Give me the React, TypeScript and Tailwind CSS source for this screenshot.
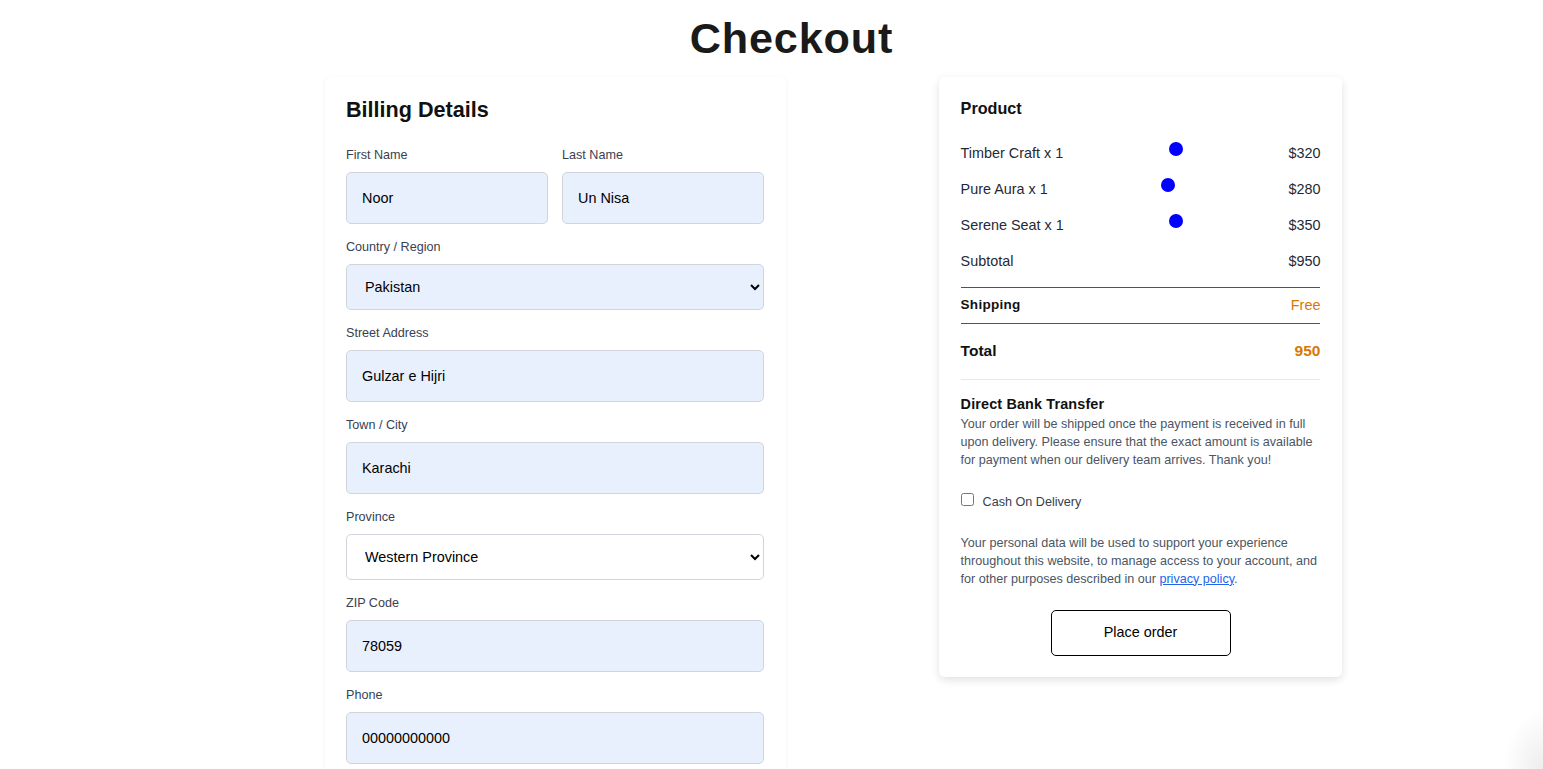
import React from "react";

const items = [
  { name: "Timber Craft x 1", price: "$320" },
  { name: "Pure Aura x 1", price: "$280" },
  { name: "Serene Seat x 1", price: "$350" },
];

function Field({ label, value }: { label: string; value: string }) {
  return (
    <div className="flex flex-col">
      <label className="mb-[8px] text-[12.6px] leading-[18px] text-[#374151]">{label}</label>
      <input
        readOnly
        value={value}
        className="h-[52px] w-full rounded-[5px] border border-[#d1d5db] bg-[#e8f0fe] px-[15px] text-[14.4px] text-black outline-none"
      />
    </div>
  );
}

function SelectField({ label, value, filled }: { label: string; value: string; filled?: boolean }) {
  return (
    <div className="flex flex-col">
      <label className="mb-[8px] text-[12.6px] leading-[18px] text-[#374151]">{label}</label>
      <select
        defaultValue={value}
        className={`h-[46px] w-full rounded-[5px] border border-[#d1d5db] px-[14px] text-[14.4px] text-black outline-none ${
          filled ? "bg-[#e8f0fe]" : "bg-white"
        }`}
      >
        <option>{value}</option>
      </select>
    </div>
  );
}

export default function App() {
  return (
    <div className="relative min-h-screen overflow-hidden bg-white font-['Liberation_Sans',Arial,sans-serif] text-[#111827]">
      <h1 className="pl-[40px] pt-[14px] text-center text-[43.2px] font-bold leading-[48px] tracking-[0.02em] text-[#1a1a1a]">
        Checkout
      </h1>

      <div className="mt-[15px] flex items-start gap-[153px] pl-[325px]">
        {/* billing */}
        <section className="w-[461px] rounded-[6px] bg-white pb-[22px] pl-[21px] pr-[22px] pt-[18px] shadow-[0_1px_4px_rgba(0,0,0,0.06)]">
          <h2 className="text-[21.6px] font-bold leading-[29px] text-[#111]">Billing Details</h2>

          <div className="mt-[22px] flex flex-col gap-[14px]">
            <div className="grid grid-cols-2 gap-[14px]">
              <Field label="First Name" value="Noor" />
              <Field label="Last Name" value="Un Nisa" />
            </div>
            <SelectField label="Country / Region" value="Pakistan" filled />
            <Field label="Street Address" value="Gulzar e Hijri" />
            <Field label="Town / City" value="Karachi" />
            <SelectField label="Province" value="Western Province" />
            <Field label="ZIP Code" value="78059" />
            <Field label="Phone" value="00000000000" />
          </div>
        </section>

        {/* order */}
        <section className="w-[403px] rounded-[6px] bg-white px-[21.6px] pb-[21px] pt-[21px] shadow-[0_3px_8px_rgba(0,0,0,0.12)]">
          <h3 className="text-[16.2px] font-bold leading-[20px] text-[#111]">Product</h3>

          <div className="mt-[25px] flex flex-col gap-[14.4px]">
            {items.map((it) => (
              <div key={it.name} className="flex items-start justify-between text-[14.4px] leading-[21.6px] text-[#1f2937]">
                <span>{it.name}</span>
                <span className="mt-[-1px] h-[14px] w-[14px] rounded-full bg-[#0000ff]" />
                <span>{it.price}</span>
              </div>
            ))}
            <div className="flex justify-between text-[14.4px] leading-[21.6px] text-[#1f2937]">
              <span>Subtotal</span>
              <span>$950</span>
            </div>
          </div>

          <div className="mt-[14px] flex items-center justify-between border-y border-[#475569] pb-[9px] pt-[8px] leading-[18px]">
            <span className="text-[13.5px] font-bold tracking-[0.02em] text-[#111]">Shipping</span>
            <span className="text-[14.4px] text-[#d97706]">Free</span>
          </div>

          <div className="flex items-center justify-between border-b border-[#e5e7eb] pb-[18px] pt-[17px] leading-[20px]">
            <span className="text-[15.5px] font-bold text-[#111]">Total</span>
            <span className="text-[15.5px] font-bold text-[#d97706]">950</span>
          </div>

          <h4 className="mt-[15px] text-[14.4px] font-bold leading-[18px] tracking-[0.01em] text-[#111]">
            Direct Bank Transfer
          </h4>
          <p className="mt-[2px] text-[12.6px] leading-[18px] text-[#4b5563]">
            Your order will be shipped once the payment is received in full upon delivery. Please ensure that the exact
            amount is available for payment when our delivery team arrives. Thank you!
          </p>

          <label className="mt-[23px] flex items-center gap-[9px] text-[12.6px] leading-[20px] text-[#374151]">
            <input type="checkbox" className="m-0 h-[13px] w-[13px] -translate-y-[2px]" />
            <span>Cash On Delivery</span>
          </label>

          <p className="mt-[22px] text-[12.6px] leading-[18px] text-[#4b5563]">
            Your personal data will be used to support your experience throughout this website, to manage access to your
            account, and for other purposes described in our{" "}
            <a href="#" className="text-[#2563eb] underline">
              privacy policy
            </a>
            .
          </p>

          <div className="mt-[22px] flex justify-center">
            <button className="h-[46px] w-[180px] rounded-[5px] border border-black bg-white text-[14.4px] text-black">
              Place order
            </button>
          </div>
        </section>
      </div>

      <div className="pointer-events-none fixed bottom-0 right-0 h-[60px] w-[40px] bg-[radial-gradient(ellipse_at_100%_100%,rgba(0,0,0,0.07),transparent_70%)]" />
    </div>
  );
}
